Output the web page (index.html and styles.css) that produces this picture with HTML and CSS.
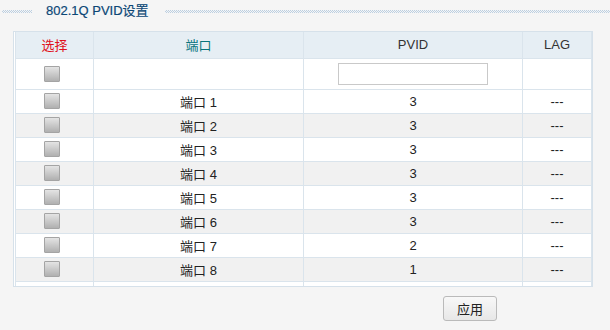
FILE: index.html
```html
<!DOCTYPE html>
<html lang="zh-CN">
<head>
  <meta charset="UTF-8">
  <meta name="viewport" content="width=device-width, initial-scale=1.0">
  <title>802.1Q PVID设置</title>
  <link rel="stylesheet" href="styles.css">
</head>
<body>
  <div class="title-bar">
    <span class="dots dots-short"></span>
    <span class="title">802.1Q PVID设置</span>
    <span class="dots"></span>
  </div>

  <div class="panel">
    <table class="grid">
      <colgroup>
        <col class="w-select">
        <col class="w-port">
        <col class="w-pvid">
        <col class="w-lag">
      </colgroup>
      <thead>
        <tr>
          <th class="head-select">选择</th>
          <th class="head-port">端口</th>
          <th>PVID</th>
          <th>LAG</th>
        </tr>
      </thead>
      <tbody id="ports">
        <!-- edit row, ports are appended below by the script -->
        <tr class="edit-row">
          <td><input type="checkbox" class="check"></td>
          <td></td>
          <td><input type="text" class="pvid-input"></td>
          <td></td>
        </tr>
      </tbody>
    </table>
  </div>

  <div class="actions">
    <button class="btn">应用</button>
  </div>

  <script>
    const ports = [
      { port: 1, pvid: 3 },
      { port: 2, pvid: 3 },
      { port: 3, pvid: 3 },
      { port: 4, pvid: 3 },
      { port: 5, pvid: 3 },
      { port: 6, pvid: 3 },
      { port: 7, pvid: 2 },
      { port: 8, pvid: 1 }
    ];

    const tbody = document.querySelector('#ports');

    function createCell(value) {
      const td = document.createElement('td');
      td.innerText = value;
      return td;
    }

    ports.forEach(function (item) {
      const tr = document.createElement('tr');
      tr.className = 'port-row';

      const checkTd = document.createElement('td');
      const box = document.createElement('input');
      box.type = 'checkbox';
      box.className = 'check';
      checkTd.append(box);

      tr.append(checkTd, createCell('端口 ' + item.port), createCell(item.pvid), createCell('---'));
      tbody.append(tr);
    });

    // empty strip under the last port, the column lines run through it
    const filler = document.createElement('tr');
    filler.className = 'filler';
    for (let i = 0; i < 4; i++) {
      filler.append(document.createElement('td'));
    }
    tbody.append(filler);
  </script>
</body>
</html>
```

FILE: styles.css
```css
* {
  box-sizing: border-box;
}

body {
  margin: 0;
  background-color: #f5f5f5;
  font-family: "Liberation Sans", Arial, "Noto Sans CJK SC", sans-serif;
  font-size: 13px;
  color: #222;
}

.title-bar {
  display: flex;
  align-items: center;
  height: 22px;
  padding-left: 2px;
}

.dots {
  flex: 1;
  height: 3px;
  background: repeating-conic-gradient(#bccfe1 0 25%, transparent 0 50%) 0 0 / 2px 2px;
}

.dots-short {
  flex: 0 0 30px;
}

.title {
  margin: 0 16px 0 14px;
  color: #0c4775;
  line-height: 22px;
  -webkit-text-stroke: 0.2px #0c4775;
}

.panel {
  width: 580px;
  margin: 9px 0 0 13px;
  padding: 0 1px;
  border: 1px solid #d6e1ea;
  background-color: #fff;
}

.grid {
  width: 576px;
  border-collapse: collapse;
  table-layout: fixed;
  text-align: center;
}

.w-select {
  width: 78px;
}

.w-port {
  width: 210px;
}

.w-pvid {
  width: 219px;
}

.w-lag {
  width: 69px;
}

.grid th,
.grid td {
  border: 1px solid #dae4ec;
  padding: 0;
  font-weight: normal;
}

.grid th {
  height: 26px;
  border-top: 0;
  background-color: #e6eef4;
  color: #333;
}

.grid .head-select {
  color: #e0101a;
}

.grid .head-port {
  color: #08747c;
}

.edit-row td {
  height: 31px;
}

.port-row td {
  height: 24px;
}

.port-row:nth-child(odd) {
  background-color: #f1f1f1;
}

.filler td {
  height: 5px;
  border-bottom: 0;
}

.check {
  appearance: none;
  -webkit-appearance: none;
  display: block;
  width: 16px;
  height: 16px;
  margin: 0 0 0 28px;
  border: 1px solid #a4a4a4;
  border-radius: 1px;
  background: linear-gradient(#e4e4e4, #b0b0b0);
}

.pvid-input {
  display: block;
  width: 150px;
  height: 22px;
  margin: 0 auto;
  border: 1px solid #c9c9c9;
  background-color: #fff;
}

.actions {
  padding: 9px 0 0 443px;
}

.btn {
  width: 54px;
  height: 25px;
  padding: 0;
  border: 1px solid #bababa;
  border-radius: 3px;
  background: linear-gradient(#f8f8f8, #e7e7e7);
  font-family: "Liberation Sans", Arial, "Noto Sans CJK SC", sans-serif;
  font-size: 13px;
  color: #222;
}
```
